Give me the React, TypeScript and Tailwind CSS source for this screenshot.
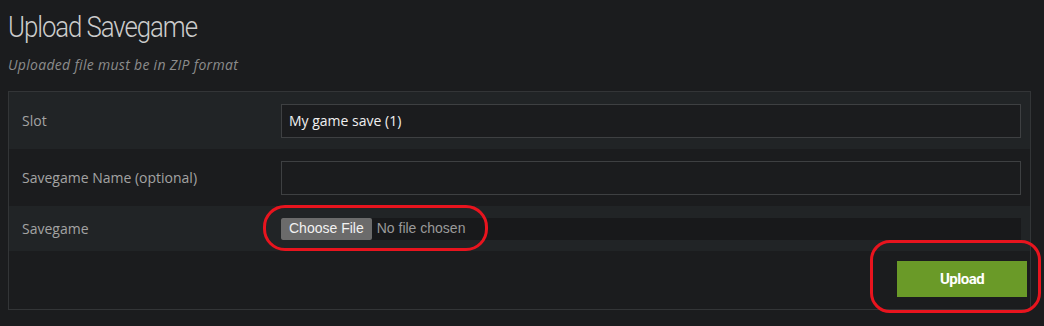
import React from "react";

function FieldRow({ label, children }: { label: string; children: React.ReactNode }) {
  return (
    <div className="flex items-center">
      <div className="w-[272px] pl-[13px] text-[14px] text-[#a3a3a3]">{label}</div>
      <div className="flex-1 pr-[9px]">{children}</div>
    </div>
  );
}

export default function App() {
  return (
    <div
      className="relative w-[1044px] h-[326px] bg-[#1b1c1e] px-2 pt-[10px] overflow-hidden"
      style={{ fontFamily: '"Open Sans", sans-serif' }}
    >
      <h1
        className="text-[29px] font-light text-[#cccccc] leading-[34px] tracking-[-1.2px] origin-left scale-x-[0.89]"
        style={{ fontFamily: "Roboto, sans-serif" }}
      >
        Upload Savegame
      </h1>
      <p className="mt-[12px] text-[14px] italic text-[#8c8c8c] leading-[18px] tracking-[0.3px]">
        Uploaded file must be in ZIP format
      </p>

      <div className="mt-[17px] w-[1023px] h-[219px] border border-[#333537]">
        <div className="h-[57px] flex flex-col justify-center bg-[#212426]">
          <FieldRow label="Slot">
            <input
              readOnly
              value="My game save (1)"
              className="w-full h-[34px] bg-[#1b1c1e] border border-[#3e4042] px-[7px] text-[14px] text-[#f0f0f0] outline-none"
            />
          </FieldRow>
        </div>
        <div className="h-[57px] flex flex-col justify-center">
          <FieldRow label="Savegame Name (optional)">
            <input
              readOnly
              value=""
              className="w-full h-[34px] bg-[#1b1c1e] border border-[#3e4042] px-[7px] text-[14px] text-[#f0f0f0] outline-none"
            />
          </FieldRow>
        </div>
        <div className="h-[45px] flex flex-col justify-center bg-[#212426]">
          <FieldRow label="Savegame">
            <div className="h-[22px] bg-[#18191b] flex items-center">
              <span
                className="h-[22px] px-[8px] bg-[#6b6b6b] text-[#f2f2f2] text-[14px] flex items-center rounded-[2px]"
                style={{ fontFamily: '"Liberation Sans", Arial, sans-serif' }}
              >
                Choose File
              </span>
              <span
                className="ml-[5px] text-[14px] text-[#9a9a9a]"
                style={{ fontFamily: '"Liberation Sans", Arial, sans-serif' }}
              >
                No file chosen
              </span>
            </div>
          </FieldRow>
        </div>
        <div className="flex justify-end pr-[3px] pt-[10px]">
          <button
            className="w-[130px] h-[36px] bg-[#6a9a28] text-white text-[15px] font-bold tracking-[-0.5px]"
            style={{ fontFamily: "Roboto, sans-serif" }}
          >
            Upload
          </button>
        </div>
      </div>

      <div className="absolute left-[263px] top-[205px] w-[225px] h-[46px] border-[3px] border-[#e8141e] rounded-[22px]" />
      <div className="absolute left-[870px] top-[240px] w-[171px] h-[73px] border-[3px] border-[#e8141e] rounded-[20px]" />
    </div>
  );
}
